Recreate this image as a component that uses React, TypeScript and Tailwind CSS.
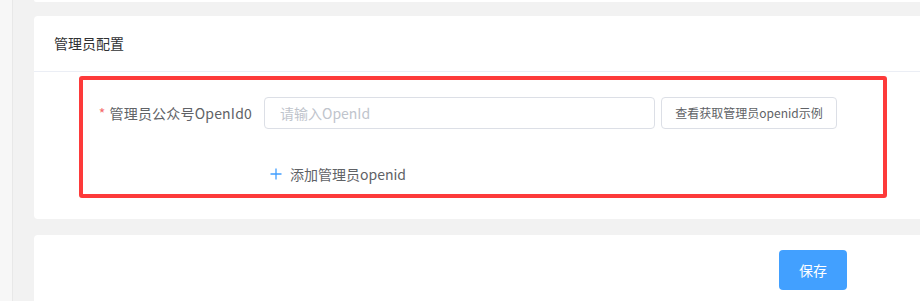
import React from "react";

export default function App() {
  return (
    <div className="flex h-[301px] w-[920px] overflow-hidden bg-[#f2f2f2] font-['Noto_Sans_CJK_SC',sans-serif]">
      <div className="w-[13px] shrink-0 border-r border-[#e8e8e8] bg-[#f7f7f7]" />
      <div className="flex w-[920px] shrink-0 flex-col pl-[21px]">
        <div className="h-[2px] rounded-b-[4px] bg-white" />
        <div className="mt-[14px] h-[203px] rounded-[4px] bg-white">
          <div className="flex h-[56px] items-center border-b border-[#ebeef5] px-[20px] pb-[2px] text-[14px] leading-[20px] text-[#303133]">
            管理员配置
          </div>
          <div className="pl-[45px] pt-[4px]">
            <div className="h-[122px] w-[808px] rounded-[3px] border-4 border-[#fd3a3a] pt-[17px]">
              <div className="flex h-[32px] items-center">
                <div className="w-[181px] pr-[12px] text-right text-[14px] leading-[20px] tracking-[0.2px] text-[#606266]">
                  <span className="mr-[4px] text-[#f56c6c]">*</span>
                  管理员公众号OpenId0
                </div>
                <input
                  className="h-[32px] w-[391px] rounded-[4px] border border-[#dcdfe6] px-[15px] text-[14px] text-[#606266] outline-none placeholder:text-[#c0c4cc]"
                  placeholder="请输入OpenId"
                />
                <button className="ml-[6px] flex h-[32px] w-[176px] items-center justify-center rounded-[4px] border border-[#dcdfe6] bg-white text-[12px] leading-[16px] text-[#606266]">
                  查看获取管理员openid示例
                </button>
              </div>
              <div className="ml-[187px] mt-[35px] flex h-[20px] items-center text-[14px] leading-[20px] text-[#606266]">
                <svg width="12" height="12" viewBox="0 0 12 12" className="mr-[8px]">
                  <path d="M6 0.5V11.5M0.5 6H11.5" stroke="#409eff" strokeWidth="1.3" fill="none" />
                </svg>
                添加管理员openid
              </div>
            </div>
          </div>
        </div>
        <div className="mt-[16px] flex-1 rounded-t-[4px] bg-white pl-[745px] pt-[15px]">
          <button className="flex h-[40px] w-[68px] items-center justify-center rounded-[4px] bg-[#42a0ff] text-[14px] leading-[20px] text-white">
            保存
          </button>
        </div>
      </div>
    </div>
  );
}
